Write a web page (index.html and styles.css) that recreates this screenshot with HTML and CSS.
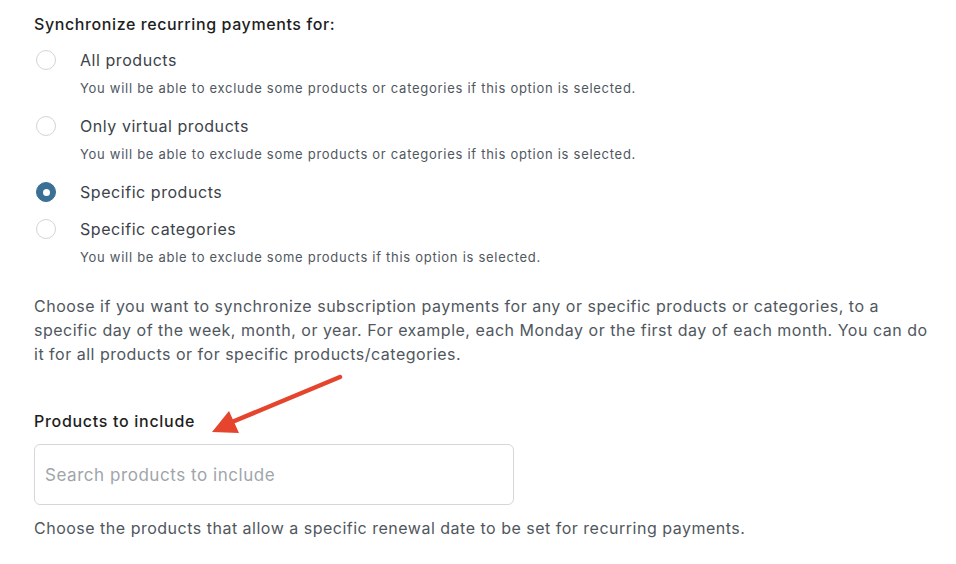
FILE: index.html
```html
<!DOCTYPE html>
<html lang="en">
<head>
<meta charset="utf-8">
<title>Synchronize recurring payments</title>
<link rel="stylesheet" href="styles.css">
</head>
<body>
<div class="page">
  <div class="title">Synchronize recurring payments for:</div>
  <div class="options">
    <div class="option">
      <span class="radio"></span>
      <div class="opt-body">
        <div class="opt-label">All products</div>
        <div class="opt-desc">You will be able to exclude some products or categories if this option is selected.</div>
      </div>
    </div>
    <div class="option">
      <span class="radio"></span>
      <div class="opt-body">
        <div class="opt-label">Only virtual products</div>
        <div class="opt-desc">You will be able to exclude some products or categories if this option is selected.</div>
      </div>
    </div>
    <div class="option">
      <span class="radio checked"></span>
      <div class="opt-body">
        <div class="opt-label">Specific products</div>
      </div>
    </div>
    <div class="option">
      <span class="radio"></span>
      <div class="opt-body">
        <div class="opt-label">Specific categories</div>
        <div class="opt-desc">You will be able to exclude some products if this option is selected.</div>
      </div>
    </div>
  </div>
  <p class="help">Choose if you want to synchronize subscription payments for any or specific products or categories, to a specific day of the week, month, or year. For example, each Monday or the first day of each month. You can do it for all products or for specific products/categories.</p>
  <div class="field-label">Products to include</div>
  <div class="search">Search products to include</div>
  <p class="field-help">Choose the products that allow a specific renewal date to be set for recurring payments.</p>
  <svg class="arrow" width="956" height="564" viewBox="0 0 956 564">
    <line x1="340" y1="377" x2="232" y2="422" stroke="#e4452c" stroke-width="4.5" stroke-linecap="round"/>
    <polygon points="212,432 229,411 239,433" fill="#e4452c"/>
  </svg>
</div>
</body>
</html>
```
FILE: styles.css
```css
* { box-sizing: border-box; }
html, body { margin: 0; padding: 0; background: #fff; }
body {
  font-family: Inter, "Noto Sans", "Liberation Sans", sans-serif;
  color: #50575e;
  width: 956px;
  height: 564px;
  overflow: hidden;
}
.page {
  position: relative;
  padding: 12px 0 0 34px;
  width: 956px;
  height: 564px;
}
.title {
  font-size: 16px;
  line-height: 24px;
  font-weight: 500;
  letter-spacing: 0.6px;
  color: #1e1e1e;
}
.options {
  margin-top: 12px;
  display: flex;
  flex-direction: column;
  gap: 13px;
}
.option {
  display: flex;
  align-items: flex-start;
}
.radio {
  flex: none;
  width: 20px;
  height: 20px;
  margin: 2px 24px 0 2px;
  border-radius: 50%;
  border: 1px solid #d4d4d4;
  background: #fff;
  position: relative;
}
.radio.checked {
  border-color: #3a6f96;
  background: #3a6f96;
}
.radio.checked::after {
  content: "";
  position: absolute;
  left: 50%;
  top: 50%;
  width: 7px;
  height: 7px;
  margin: -3.5px 0 0 -3.5px;
  border-radius: 50%;
  background: #fff;
}
.opt-label {
  font-size: 16px;
  line-height: 24px;
  letter-spacing: 0.55px;
  color: #3c434a;
}
.opt-desc {
  margin-top: 6px;
  margin-bottom: 3px;
  font-size: 13px;
  line-height: 20px;
  letter-spacing: 0.72px;
  color: #50575e;
}
.help {
  margin: 24px 0 0;
  width: 900px;
  font-size: 16px;
  line-height: 24px;
  letter-spacing: 0.5px;
  color: #50575e;
}
.field-label {
  margin-top: 43px;
  font-size: 16px;
  line-height: 24px;
  font-weight: 500;
  letter-spacing: 0.7px;
  color: #1e1e1e;
}
.search {
  margin-top: 11px;
  width: 480px;
  height: 61px;
  border: 1px solid #d4d6d9;
  border-radius: 6px;
  padding: 0 10px;
  display: flex;
  align-items: center;
  font-size: 17px;
  letter-spacing: 0.55px;
  color: #a0a5aa;
}
.field-help {
  margin: 11px 0 0;
  font-size: 16px;
  line-height: 24px;
  letter-spacing: 0.5px;
  color: #50575e;
}
.arrow {
  position: absolute;
  left: 0;
  top: 0;
  pointer-events: none;
}
```
